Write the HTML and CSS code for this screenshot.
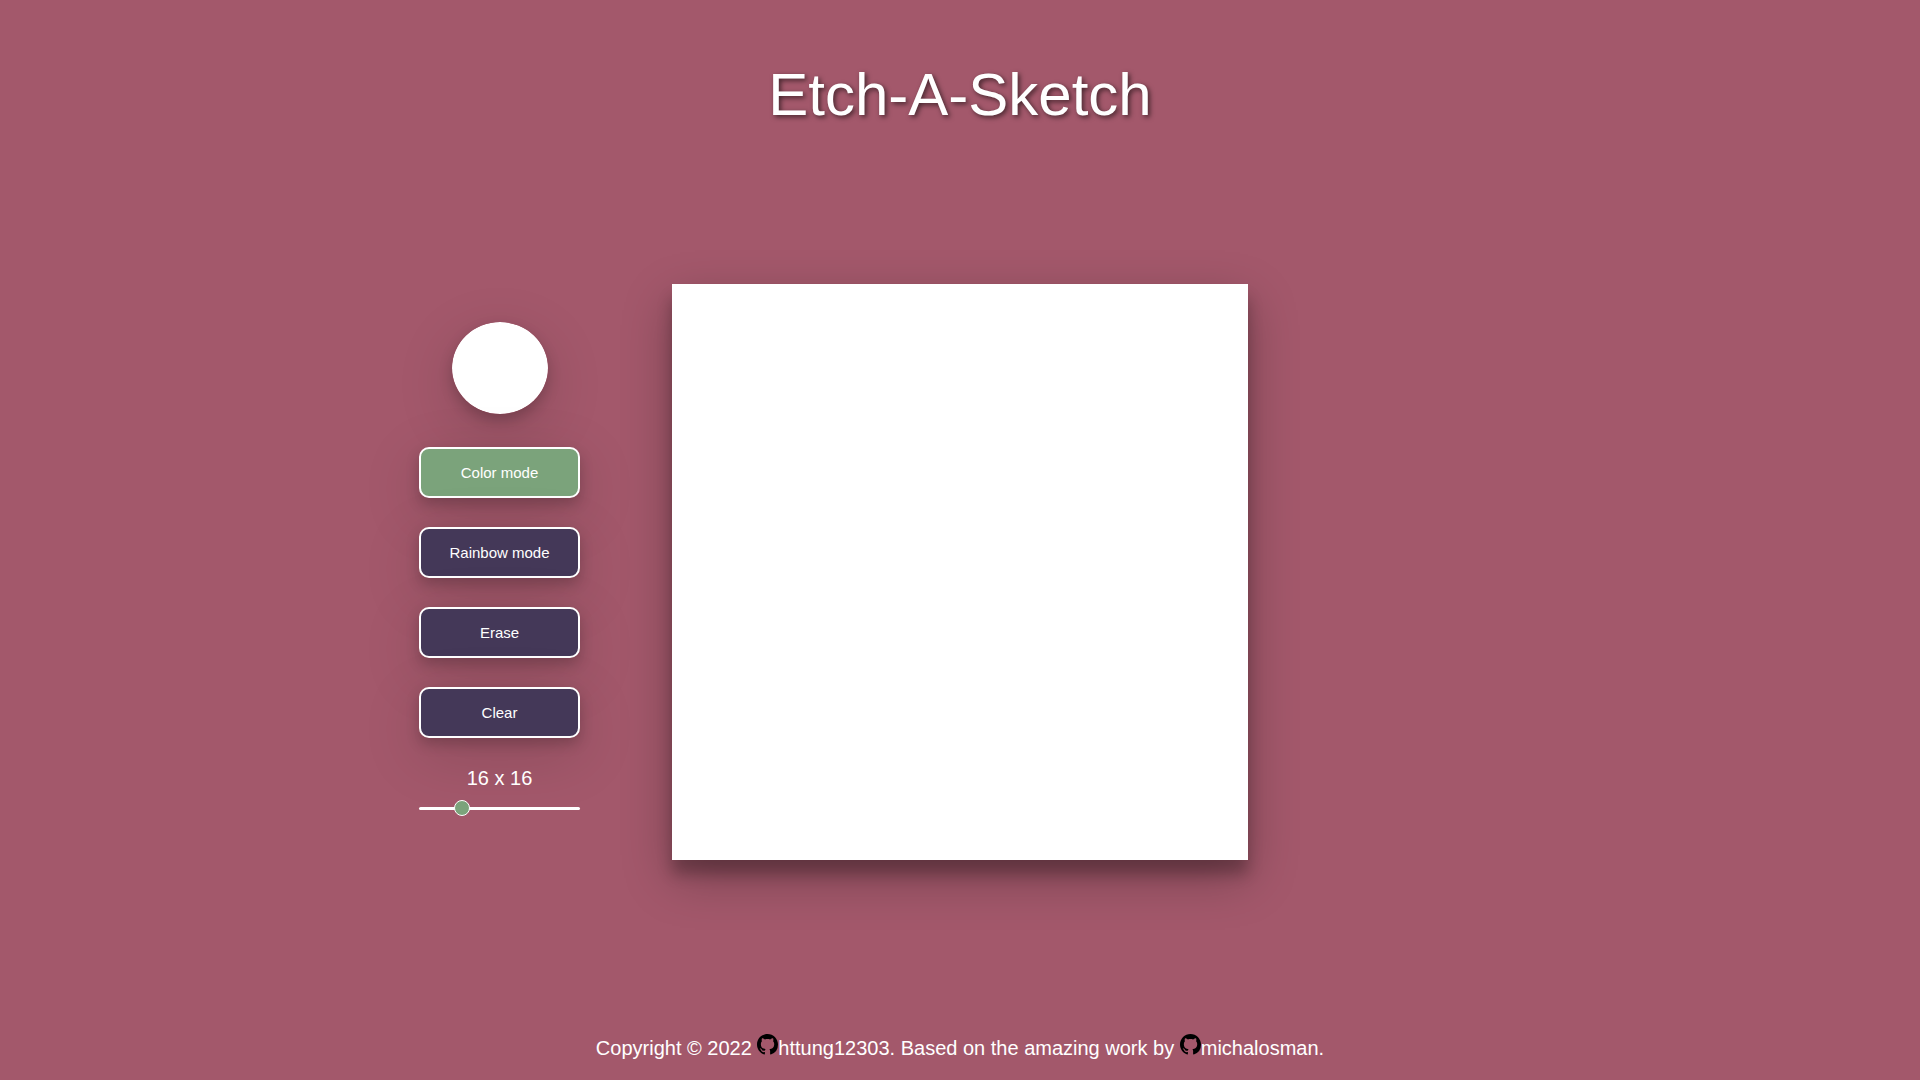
FILE: index.html
```html
<!DOCTYPE html>
<html lang="en">
<head>
  <meta charset="utf-8">
  <meta name="viewport" content="width=device-width, initial-scale=1">
  <title>Etch-A-Sketch</title>
  <link rel="stylesheet" href="styles.css">
</head>
<body>
  <svg class="sprite" aria-hidden="true">
    <symbol id="github" viewBox="0 0 16 16">
      <path d="M8 0C3.58 0 0 3.58 0 8c0 3.54 2.29 6.53 5.47 7.59.4.07.55-.17.55-.38 0-.19-.01-.82-.01-1.49-2.01.37-2.53-.49-2.69-.94-.09-.23-.48-.94-.82-1.13-.28-.15-.68-.52-.01-.53.63-.01 1.08.58 1.23.82.72 1.21 1.87.87 2.33.66.07-.52.28-.87.51-1.07-1.78-.2-3.64-.89-3.64-3.95 0-.87.31-1.59.82-2.15-.08-.2-.36-1.02.08-2.12 0 0 .67-.21 2.2.82.64-.18 1.32-.27 2-.27s1.36.09 2 .27c1.53-1.04 2.2-.82 2.2-.82.44 1.1.16 1.92.08 2.12.51.56.82 1.27.82 2.15 0 3.07-1.87 3.75-3.65 3.95.29.25.54.73.54 1.48 0 1.07-.01 1.93-.01 2.2 0 .21.15.46.55.38A8.01 8.01 0 0 0 16 8c0-4.42-3.58-8-8-8z"/>
    </symbol>
  </svg>

  <header class="header">
    <h1 class="title">Etch-A-Sketch</h1>
  </header>

  <main class="main">
    <section class="controls">
      <input class="color-picker" type="color" value="#ffffff" aria-label="Pen color">
      <button class="button button-active" type="button">Color mode</button>
      <button class="button" type="button">Rainbow mode</button>
      <button class="button" type="button">Erase</button>
      <button class="button" type="button">Clear</button>
      <div class="size">
        <label class="size-label" for="size">16 x 16</label>
        <input class="slider" id="size" type="range" min="1" max="64" value="16">
      </div>
    </section>
    <section class="board" aria-label="Drawing board"></section>
  </main>

  <footer class="footer">
    Copyright © 2022 <a class="link" href="https://github.com/httung12303"><svg class="icon" aria-hidden="true"><use href="#github"/></svg>httung12303</a>. Based on the amazing work by <a class="link" href="https://github.com/michalosman"><svg class="icon" aria-hidden="true"><use href="#github"/></svg>michalosman</a>.
  </footer>
</body>
</html>
```
FILE: styles.css
```css
* {
  box-sizing: border-box;
}

body {
  display: flex;
  flex-direction: column;
  min-height: 100vh;
  margin: 0;
  background: #a3586b;
  color: #fff;
  font-family: "Liberation Sans", Arial, sans-serif;
  font-size: 20px;
}

.sprite {
  display: none;
}

.header {
  padding-top: 60px;
  text-align: center;
}

.title {
  margin: 0;
  font-size: 60px;
  font-weight: 400;
  text-shadow: 2px 2px 5px rgba(0, 0, 0, 0.6);
}

.main {
  flex: 1;
  display: grid;
  grid-template-columns: 1fr 30vw 1fr;
  column-gap: 92px;
  align-items: center;
}

.controls {
  justify-self: end;
  display: flex;
  flex-direction: column;
  align-items: center;
  gap: 29px;
  width: 161px;
}

.color-picker,
.button {
  box-shadow: 0 16px 60px rgba(0, 0, 0, 0.15), 0 6px 14px rgba(0, 0, 0, 0.2);
  cursor: pointer;
}

.color-picker {
  width: 96px;
  height: 92px;
  margin: 4px 0;
  padding: 0;
  border: 0;
  border-radius: 50%;
  background: none;
  appearance: none;
}

.color-picker::-webkit-color-swatch-wrapper {
  padding: 0;
}

.color-picker::-webkit-color-swatch {
  border: 0;
  border-radius: 50%;
}

.button {
  width: 100%;
  height: 51px;
  border: 2px solid #fff;
  border-radius: 10px;
  background: #443858;
  color: #fff;
  font-family: inherit;
  font-size: 15px;
}

.button-active {
  background: #7ba37b;
}

.size {
  display: flex;
  flex-direction: column;
  align-items: center;
  width: 100%;
}

.slider {
  width: 100%;
  height: 36px;
  margin: 0;
  background: none;
  appearance: none;
}

.slider::-webkit-slider-runnable-track {
  height: 3px;
  border-radius: 2px;
  background: #fff;
}

.slider::-webkit-slider-thumb {
  width: 16px;
  height: 16px;
  margin-top: -7px;
  border: 1px solid #fff;
  border-radius: 50%;
  background: #7ba37b;
  appearance: none;
}

.board {
  aspect-ratio: 1;
  background: #fff;
  box-shadow: 0 18px 46px rgba(0, 0, 0, 0.28), 0 14px 14px rgba(0, 0, 0, 0.24);
}

.footer {
  padding: 19px 20px 20px;
  text-align: center;
}

.link {
  color: inherit;
  text-decoration: none;
}

.icon {
  width: 21px;
  height: 21px;
}
```
